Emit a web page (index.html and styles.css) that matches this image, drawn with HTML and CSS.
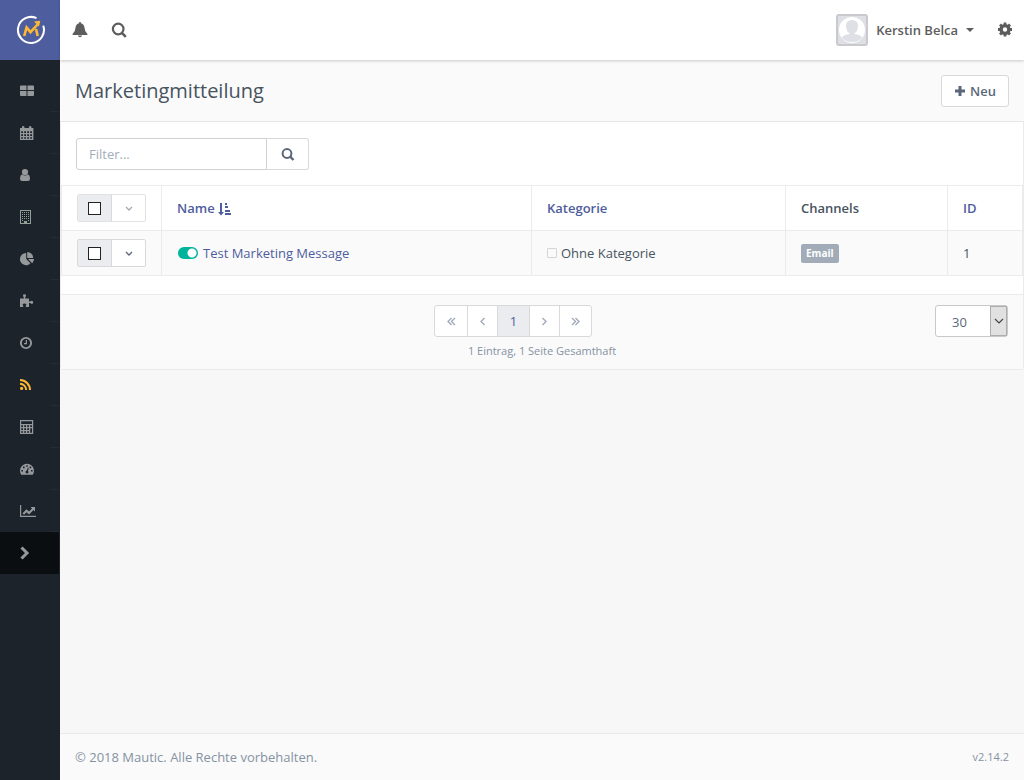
FILE: index.html
```html
<!DOCTYPE html>
<html lang="de">
<head>
<meta charset="utf-8">
<title>Marketingmitteilung | Mautic</title>
<link rel="stylesheet" href="styles.css">
</head>
<body>
<div class="app">
  <aside class="sidebar">
    <a class="brand" href="#" aria-label="Mautic">
      <svg width="30" height="30" viewBox="0 0 30 30" fill="none">
        <path d="M20.5 3.2A13 13 0 1 0 27.2 10.600" fill="none" stroke="#fff" stroke-width="2"/>
        <path d="M8.200 21 10.600 12.500 14.500 17.200 21.500 9.500M20 14 21.700 21" fill="none" stroke="#fdb933" stroke-width="2.600"/>
        <path d="M18 6.500 24.300 5.700 23 11.500Z" fill="#fdb933"/>
      </svg>
    </a>
    <nav class="menu" aria-label="Hauptmenü">
      <a class="menu-item" href="#" aria-label="Dashboard"><svg width="18" height="14" viewBox="0 0 18 14"><path d="M1 1.500h5.500V6H0V2.500q0-1 1-1zM7.500 1.500H13q1 0 1 1V6H7.500zM0 7h6.500v5H1q-1 0-1-1zM7.500 7H14v4q0 1-1 1H7.500z"/></svg></a>
      <a class="menu-item" href="#" aria-label="Kalender"><svg width="18" height="14" viewBox="0 0 18 14"><path fill-rule="evenodd" d="M0 2h2V1q0-1 1.200-1t1.200 1v1h4.600V1q0-1 1.200-1t1.200 1v1h2v12H0zM1.200 5.200v1.800H3V5.200zM4.200 5.200v1.800H6V5.200zM7.200 5.200v1.800H9V5.200zM10.200 5.200v1.800H12V5.200zM1.200 8.200V10H3V8.200zM4.200 8.200V10H6V8.200zM7.200 8.200V10H9V8.200zM10.200 8.200V10H12V8.200zM1.200 11.200v1.600H3v-1.600zM4.200 11.200v1.600H6v-1.600zM7.200 11.200v1.600H9v-1.600zM10.200 11.200v1.600H12v-1.600z"/></svg></a>
      <a class="menu-item" href="#" aria-label="Kontakte"><svg width="18" height="14" viewBox="0 0 18 14"><circle cx="5" cy="4" r="3.100"/><path d="M2 6.200Q5 8.800 8 6.200 10 7 10 10.500 10 13 8 13H2Q0 13 0 10.500 0 7 2 6.200z"/></svg></a>
      <a class="menu-item" href="#" aria-label="Firmen"><svg class="company" width="18" height="14" viewBox="0 0 18 14"><path fill-rule="evenodd" d="M0 0h11v14H0zM1 1v12h3v-2h3v2h3V1z"/><path d="M2 2h1v1H2zM4 2h1v1H4zM6 2h1v1H6zM8 2h1v1H8zM2 4h1v1H2zM4 4h1v1H4zM6 4h1v1H6zM8 4h1v1H8zM2 6h1v1H2zM4 6h1v1H4zM6 6h1v1H6zM8 6h1v1H8zM2 8h1v1H2zM4 8h1v1H4zM6 8h1v1H6zM8 8h1v1H8zM2 10h1v1H2zM8 10h1v1H8z"/></svg></a>
      <a class="menu-item" href="#" aria-label="Segmente"><svg width="18" height="14" viewBox="0 0 18 14"><path d="M6.200 1v6l4.300 4.300A6.100 6.100 0 1 1 6.200 1zM7.200 0a6 6 0 0 1 6 6h-6zM8 7h6a6 6 0 0 1-1.800 4.200z"/></svg></a>
      <a class="menu-item" href="#" aria-label="Komponenten"><svg width="18" height="14" viewBox="0 0 18 14"><path d="M0 4.500h3.800V3.200Q3 2.800 3 1.600 3 .2 4.500.2T6 1.600Q6 2.800 5.200 3.200v1.300H9v3h1.200q.8-.8 1.600-.8 1.400 0 1.400 1.600t-1.400 1.600q-.8 0-1.600-.8H9V13H5.800v-1.200q.8-.7.5-1.500-.4-.8-1.800-.8t-1.800.8q-.3.800.5 1.500V13H0z"/></svg></a>
      <a class="menu-item" href="#" aria-label="Kampagnen"><svg width="18" height="14" viewBox="0 0 18 14"><circle cx="6" cy="7" r="5.100" fill="none" stroke="currentColor" stroke-width="1.900"/><path d="M5.800 4h1.200v4.200H4V7h1.800z"/></svg></a>
      <a class="menu-item is-current" href="#" aria-label="Kanäle"><svg width="18" height="14" viewBox="0 0 18 14"><circle cx="1.600" cy="10.400" r="1.600"/><path d="M0 5.800a6.200 6.200 0 0 1 6.200 6.200M0 2a10 10 0 0 1 10 10" fill="none" stroke="currentColor" stroke-width="2"/></svg></a>
      <a class="menu-item" href="#" aria-label="Punkte"><svg width="18" height="14" viewBox="0 0 18 14"><path fill-rule="evenodd" d="M0 0h13.200v14H0zM1.200 1.200V4H12V1.200zM1.200 5.200v1.800H3V5.200zM4.200 5.200v1.800H6V5.200zM7.200 5.200v1.800H9V5.200zM10.200 5.200v1.800H12V5.200zM1.200 8.200V10H3V8.200zM4.200 8.200V10H6V8.200zM7.200 8.200V10H9V8.200zM10.200 8.200v4.600H12V8.200zM1.200 11.200v1.600H3v-1.600zM4.200 11.200v1.600H6v-1.600zM7.200 11.200v1.600H9v-1.600z"/></svg></a>
      <a class="menu-item" href="#" aria-label="Stufen"><svg width="18" height="14" viewBox="0 0 18 14"><path fill-rule="evenodd" d="M7 1.800a7 7 0 0 1 6.100 10.400q-.3.600-1 .6H1.900q-.7 0-1-.6A7 7 0 0 1 7 1.800zM6.200 3.200v1.600h1.600V3.200zM3 4.600v1.600h1.600V4.600zM9.600 4.600v1.600h1.600V4.600zM1.400 8v1.600H3V8zM11 8v1.600h1.600V8zM7.900 5.800 6.800 8.600Q5.400 9 5.500 10.300q.3 1.300 1.600 1.300 1.500-.1 1.500-1.500 0-.7-.7-1.200l.9-2.800z"/></svg></a>
      <a class="menu-item" href="#" aria-label="Berichte"><svg width="18" height="14" viewBox="0 0 18 14"><path d="M0 1h1.200v10.800H16V13H0zM2.500 9.300 6.500 5.200 9 7.600 12 4.500 10.600 3H15v4.400L13.500 6 9 10.600 6.500 8.200 4 10.800z"/></svg></a>
      <button class="menu-item menu-toggle" type="button" aria-label="Menü ausklappen"><svg width="18" height="14" viewBox="0 0 18 14"><path d="M1.500 1.500 7 7l-5.500 5.500" fill="none" stroke="currentColor" stroke-width="3"/></svg></button>
    </nav>
  </aside>

  <div class="page">
    <header class="topbar">
      <button class="icon-button" type="button" aria-label="Benachrichtigungen"><svg width="16" height="16" viewBox="0 0 16 16"><path d="M7.200 0h1.600v1.200q3.300.7 3.700 4.500.2 4 2.900 6.300v1H.6v-1q2.700-2.300 2.900-6.300.4-3.800 3.700-4.500zM6 13.500h4q-.4 1.700-2 1.700t-2-1.700z"/></svg></button>
      <button class="icon-button" type="button" aria-label="Suche"><svg width="16" height="16" viewBox="0 0 16 16"><path d="M10.600 10.600 14.800 14.800" stroke="currentColor" stroke-width="2.600"/><circle cx="7.200" cy="7" r="5.300" fill="none" stroke="currentColor" stroke-width="2.200"/></svg></button>
      <button class="account" type="button">
        <svg class="avatar" width="32" height="32" viewBox="0 0 32 32"><rect x="1" y="1" width="30" height="30" rx="2" fill="#dfe0e5" stroke="#c9c9ce" stroke-width="2"/><circle cx="16" cy="16" r="13" fill="#fff"/><path d="M16 6q6 0 6 6.200Q21.500 18 18.500 19v1q5.500.5 8 3.500Q22.500 28 16 28T5.500 23.500q2.500-3 8-3.500v-1Q10.500 18 10 12.200 10 6 16 6z" fill="#dfe0e5"/></svg>
        <span>Kerstin Belca</span>
        <svg width="8" height="4" viewBox="0 0 8 4"><path d="M0 0h8L4 4z"/></svg>
      </button>
      <button class="icon-button" type="button" aria-label="Einstellungen"><svg width="16" height="16" viewBox="0 0 16 16"><circle cx="8" cy="7.500" r="3.900" fill="none" stroke="currentColor" stroke-width="3.400"/><path d="M8 .5v3M8 11.500v3M1 7.500h3M12 7.500h3M3 2.500l2 2M11 10.500l2 2M13 2.500l-2 2M5 10.500l-2 2" stroke="currentColor" stroke-width="2.800"/></svg></button>
    </header>

    <main class="content">
      <div class="page-header">
        <h1 class="page-title">Marketingmitteilung</h1>
        <a class="button" href="#"><svg width="12" height="12" viewBox="0 0 12 12"><path d="M6 1v10M1 6h10" stroke="currentColor" stroke-width="3"/></svg>Neu</a>
      </div>

      <section class="panel">
        <form class="filter" role="search">
          <input class="filter-input" type="text" placeholder="Filter..." aria-label="Filter">
          <button class="filter-button" type="button" aria-label="Suchen"><svg width="14" height="14" viewBox="0 0 14 14"><path d="M9 9.500 12.500 13" stroke="currentColor" stroke-width="2.400"/><circle cx="6" cy="6.500" r="4.400" fill="none" stroke="currentColor" stroke-width="2"/></svg></button>
        </form>

        <table class="list">
          <colgroup><col class="col-select"><col><col class="col-category"><col class="col-channels"><col class="col-id"></colgroup>
          <thead>
            <tr>
              <th scope="col"><div class="picker picker-muted"><label class="picker-check"><input class="tick" type="checkbox" aria-label="Alle auswählen"></label><button class="picker-menu" type="button" aria-label="Aktionen"><svg width="8" height="5" viewBox="0 0 8 5"><path d="M1 1l3 3 3-3" fill="none" stroke="currentColor" stroke-width="1.300"/></svg></button></div></th>
              <th scope="col"><a class="link" href="#">Name <svg class="sort" width="14" height="14" viewBox="0 0 14 14"><path d="M2 1h2v9h2l-3 3.500L0 10h2zM7 1h2v2H7zM7 4h3v2H7zM7 8h5v2H7zM7 11h6v2H7z"/></svg></a></th>
              <th scope="col"><a class="link" href="#">Kategorie</a></th>
              <th scope="col">Channels</th>
              <th scope="col"><a class="link" href="#">ID</a></th>
            </tr>
          </thead>
          <tbody>
            <tr>
              <td><div class="picker"><label class="picker-check"><input class="tick" type="checkbox" aria-label="Test Marketing Message auswählen"></label><button class="picker-menu" type="button" aria-label="Aktionen"><svg width="8" height="5" viewBox="0 0 8 5"><path d="M1 1l3 3 3-3" fill="none" stroke="currentColor" stroke-width="1.300"/></svg></button></div></td>
              <td><div class="cell"><input class="switch" type="checkbox" role="switch" checked aria-label="Veröffentlicht"><a class="link" href="#">Test Marketing Message</a></div></td>
              <td><div class="cell"><span class="swatch"></span>Ohne Kategorie</div></td>
              <td><div class="cell"><span class="tag">Email</span></div></td>
              <td>1</td>
            </tr>
          </tbody>
        </table>

        <div class="panel-footer">
          <div class="paging">
            <nav class="pages" aria-label="Seiten">
              <a class="page-link page-link-wide" href="#" aria-label="Erste Seite"><svg width="9" height="9" viewBox="0 0 9 9"><path d="M4.500 1 1 4.500 4.500 8M8 1 4.500 4.500 8 8"/></svg></a>
              <a class="page-link" href="#" aria-label="Vorherige Seite"><svg width="5" height="9" viewBox="0 0 5 9"><path d="M4.500 1 1 4.500 4.500 8"/></svg></a>
              <a class="page-link page-link-wide is-active" href="#" aria-current="page">1</a>
              <a class="page-link" href="#" aria-label="Nächste Seite"><svg width="5" height="9" viewBox="0 0 5 9"><path d="M.5 1 4 4.500.5 8"/></svg></a>
              <a class="page-link page-link-wide" href="#" aria-label="Letzte Seite"><svg width="9" height="9" viewBox="0 0 9 9"><path d="M1 1l3.500 3.500L1 8M4.500 1 8 4.500 4.500 8"/></svg></a>
            </nav>
            <small class="summary">1 Eintrag, 1 Seite Gesamthaft</small>
          </div>
          <div class="limit">
            <select class="limit-select" aria-label="Einträge pro Seite"><option>30</option></select>
            <span class="limit-arrow"><svg width="10" height="6" viewBox="0 0 10 6"><path d="M1 1l4 4 4-4" fill="none" stroke="#444" stroke-width="1.200"/></svg></span>
          </div>
        </div>
      </section>
    </main>

    <footer class="footer">
      <span>© 2018 Mautic. Alle Rechte vorbehalten.</span>
      <small class="version">v2.14.2</small>
    </footer>
  </div>
</div>
</body>
</html>
```
FILE: styles.css
```css
*, *::before, *::after { box-sizing: border-box; }
body {
  margin: 0;
  background: #f7f7f7;
  color: #47535f;
  font: 13px/20px "Open Sans", "Noto Sans", sans-serif;
}
a { color: inherit; text-decoration: none; }
button, input, select { margin: 0; font: inherit; color: inherit; }
button { padding: 0; border: 0; background: none; cursor: pointer; }
svg { display: block; flex: none; fill: currentColor; }

.app { display: flex; min-height: 100vh; }

.sidebar { flex: none; width: 60px; background: #1d232a; }
.brand {
  display: flex;
  align-items: center;
  justify-content: center;
  height: 60px;
  padding-left: 2px;
  background: #4e5d9d;
}
.menu { display: flex; flex-direction: column; padding: 10px 1px 0 0; }
.menu-item {
  display: flex;
  align-items: center;
  height: 42px;
  padding-left: 20px;
  color: #96999c;
  background: linear-gradient(#252b32, #252b32) right bottom / 9px 1px no-repeat;
}
.menu-item.is-current { color: #fdb933; }
.menu-toggle { background: #0b0e11; }
.company { color: #8fa096; }

.page { display: flex; flex: 1; flex-direction: column; min-width: 0; }
.topbar {
  position: relative;
  display: flex;
  align-items: center;
  gap: 23px;
  height: 60px;
  padding: 0 11px 0 12px;
  background: #fff;
  color: #5d5d5d;
  box-shadow: 0 1px 3px rgba(0, 0, 0, .2);
}
.account {
  display: flex;
  align-items: center;
  gap: 8px;
  margin-left: auto;
  font-weight: 600;
}

.content { flex: 1; }
.page-header {
  display: flex;
  align-items: center;
  justify-content: space-between;
  height: 62px;
  padding: 0 15px;
  border-bottom: 1px solid #e6e6e8;
  background: #fafafa;
}
.page-title { margin: 0; font-size: 20px; font-weight: 400; line-height: 28px; }
.button {
  display: flex;
  align-items: center;
  gap: 4px;
  height: 32px;
  padding: 0 12px;
  border: 1px solid #d9d9dc;
  border-radius: 3px;
  background: #fff;
  color: #5b6779;
  font-weight: 600;
}

.panel {
  border: 1px solid #ebebee;
  border-top: 0;
  border-radius: 0 0 3px 3px;
  background: #fff;
}
.filter { display: flex; padding: 16px 15px 15px; }
.filter-input {
  width: 191px;
  height: 32px;
  padding: 0 12px;
  border: 1px solid #cfd0d3;
  border-radius: 3px 0 0 3px;
  background: #fff;
}
.filter-input::placeholder { color: #a3adb8; opacity: 1; }
.filter-button {
  display: grid;
  place-items: center;
  width: 42px;
  height: 32px;
  border: 1px solid #d9d9dc;
  border-left: 0;
  border-radius: 0 3px 3px 0;
  background: #fff;
  color: #5b6779;
}

.list { width: 100%; border-collapse: collapse; table-layout: fixed; }
.list th, .list td {
  height: 45px;
  padding: 0 15px;
  border: 1px solid #ebebee;
  text-align: left;
}
.list th { font-weight: 600; }
.list tbody tr { background: #fafafa; }
.col-select { width: 100px; }
.col-category { width: 254px; }
.col-channels { width: 162px; }
.col-id { width: 75px; }
.link { color: #4e5d9d; }
.sort { display: inline-block; vertical-align: -3px; }
.cell { display: flex; align-items: center; gap: 4px; }

.picker {
  display: flex;
  width: 69px;
  height: 28px;
  border: 1px solid #d9d9dc;
  border-radius: 2px;
  background: #fff;
}
.picker-check {
  display: grid;
  place-items: center;
  width: 34px;
  border-right: 1px solid #d9d9dc;
  background: #ebecf0;
}
.picker-menu { display: grid; flex: 1; place-items: center; color: #5b6779; }
.picker-muted .picker-menu { color: #a3a8b2; }
.picker-muted { border-color: #e2e2e5; }
.tick { appearance: none; width: 13px; height: 13px; border: 1px solid #222; background: #fff; }
.tick:checked { background: #4e5d9d; }
.switch {
  appearance: none;
  width: 20px;
  height: 12px;
  margin: 0 1px;
  border-radius: 6px;
  background: radial-gradient(circle at 14px 6px, #fff 4px, #00b49c 5px);
}
.switch:not(:checked) { background: radial-gradient(circle at 6px 6px, #fff 4px, #a1acb8 5px); }
.swatch { width: 10px; height: 10px; border: 1px solid #d5d5d7; border-radius: 1px; }
.tag {
  padding: 0 5px;
  border-radius: 2px;
  background: #a1acb8;
  color: #fff;
  font-size: 10px;
  font-weight: 700;
  line-height: 19px;
}

.panel-footer {
  display: grid;
  grid-template-columns: 1fr 216px 1fr;
  align-items: start;
  margin-top: 18px;
  padding: 10px 15px 8px;
  border-top: 1px solid #ebebee;
  background: #fafafa;
}
.paging {
  display: flex;
  grid-column: 2;
  flex-direction: column;
  align-items: center;
  gap: 4px;
}
.pages {
  display: flex;
  align-self: flex-start;
  height: 32px;
  border: 1px solid #d9d9dc;
  border-radius: 3px;
  background: #fff;
}
.page-link { display: grid; place-items: center; width: 30px; color: #a1acb8; }
.page-link + .page-link { border-left: 1px solid #d9d9dc; }
.page-link-wide { width: 32px; }
.page-link path { fill: none; stroke: currentColor; stroke-width: 1.400; }
.page-link.is-active { background: #ebecf0; color: #4e5d9d; }
.summary { color: #8593a3; font-size: 11px; }
.limit {
  position: relative;
  display: flex;
  grid-column: 3;
  justify-self: end;
  width: 73px;
  height: 32px;
  border: 1px solid #c9c9cc;
  border-radius: 3px;
  background: #fff;
}
.limit-select {
  appearance: none;
  width: 100%;
  padding: 2px 0 0 16px;
  border: 0;
  background: transparent;
  color: #5b6779;
}
.limit-arrow {
  position: absolute;
  inset: 0 0 0 auto;
  display: grid;
  place-items: center;
  width: 17px;
  border: 1px solid #adadad;
  background: #e1e1e1;
  pointer-events: none;
}

.footer {
  display: flex;
  align-items: center;
  justify-content: space-between;
  height: 47px;
  padding: 0 15px;
  border-top: 1px solid #e9e9eb;
  background: #fafafa;
  color: #8593a3;
}
.version { font-size: 11px; }
```
